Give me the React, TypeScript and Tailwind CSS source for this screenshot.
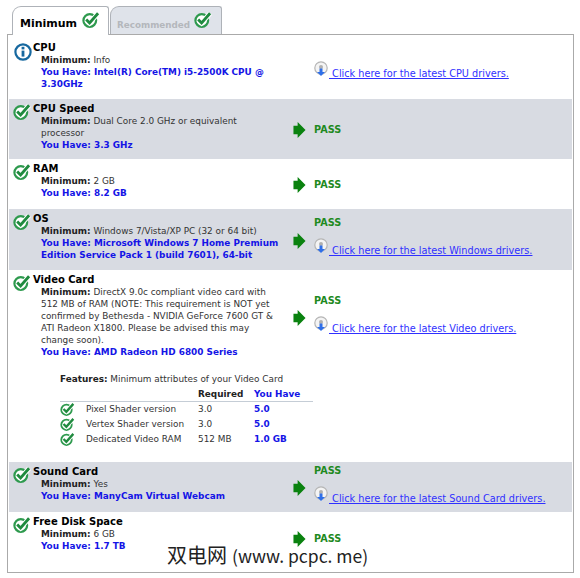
import React from "react";

function Check({ className = "" }: { className?: string }) {
  return (
    <svg viewBox="0 0 19 18" className={className}>
      <circle cx="8.2" cy="10" r="6.7" fill="#fff" stroke="#2e9a4e" strokeWidth="2.4" />
      <path d="M4.4 9 L8 12.6 L17 2.4" fill="none" stroke="#fff" strokeWidth="5.2" />
      <path d="M4.4 9 L8 12.6 L17 2.4" fill="none" stroke="#1f8a3e" strokeWidth="3" />
    </svg>
  );
}

function Info() {
  return (
    <svg viewBox="0 0 18 18" className="w-[18px] h-[18px] shrink-0 mt-[1px] ml-[1px]">
      <circle cx="9" cy="9" r="7.6" fill="#fff" stroke="#16689f" strokeWidth="2.2" />
      <rect x="7.6" y="7.6" width="2.8" height="6" fill="#16689f" />
      <rect x="7.6" y="3.8" width="2.8" height="2.6" fill="#16689f" />
    </svg>
  );
}

function Arrow() {
  return (
    <svg viewBox="0 0 14 18" className="w-[13px] h-[18px] shrink-0">
      <path d="M0.5 4.5 H5 V0.5 L13.5 9 L5 17.5 V13.5 H0.5 Z" fill="#0a820f" />
    </svg>
  );
}

function Pass() {
  return <div className="font-bold text-[#1f8a1f] text-[9.7px] leading-[12px]">PASS</div>;
}

function Driver({ name }: { name: string }) {
  return (
    <div className="flex items-end h-[18px]">
      <svg viewBox="0 0 15 17" className="w-[15px] h-[17px] shrink-0 mb-[2px]">
        <circle cx="7" cy="7" r="6.2" fill="#f4f4f4" stroke="#b5b5b5" strokeWidth="1.2" />
        <circle cx="7" cy="6" r="2" fill="#b0b0b0" />
        <path d="M5.5 7.5 H8.5 V11 H11 L7 15 L3 11 H5.5 Z" fill="#2f6fe8" />
      </svg>
      <a className="text-[#3030ff] underline text-[9.72px] leading-[13px] whitespace-pre">{` Click here for the latest ${name} drivers.`}</a>
    </div>
  );
}

function Row({
  icon,
  title,
  min,
  have,
  shaded,
  h,
  pt = "pt-[3px]",
  rightH = "h-full",
  pass,
  driver,
  children,
}: {
  icon?: React.ReactNode;
  title: string;
  min: React.ReactNode;
  have: React.ReactNode;
  shaded?: boolean;
  h: string;
  pt?: string;
  rightH?: string;
  pass?: boolean;
  driver?: string;
  children?: React.ReactNode;
}) {
  return (
    <div className={`flex ${h} ${shaded ? "bg-[#d8dbe2]" : ""}`}>
      <div className={`w-[284px] shrink-0 flex pl-[4px] pr-[13px] ${pt}`}>
        <div className="w-[20px] shrink-0 pt-[1px]">{icon ?? <Check className="w-[18px] h-[17px]" />}</div>
        <div className="min-w-0 flex-1">
          <div className="font-bold text-black text-[10px] leading-[13px]">{title}</div>
          <div className="pl-[8px] text-[8.9px] leading-[12px] text-[#333]">
            <div>
              <b className="text-[#222]">Minimum:</b> {min}
            </div>
            <div className="font-bold text-[#1414e6]">{have}</div>
          </div>
          {children}
        </div>
      </div>
      <div className={`flex-1 flex items-center pt-[2px] ${rightH}`}>
        <div className="w-[21px] shrink-0 flex">{pass && <Arrow />}</div>
        <div className={`flex flex-col gap-[10px] ${pass ? (driver ? "mb-[7px]" : "") : "mt-[5px]"}`}>
          {pass && <Pass />}
          {driver && <Driver name={driver} />}
        </div>
      </div>
    </div>
  );
}

function Feature({ n, r, y }: { n: string; r: string; y: string }) {
  return (
    <div className="flex items-center h-[15px]">
      <Check className="w-[15px] h-[14px] mr-[11px] shrink-0" />
      <div className="w-[112px] text-[#333]">{n}</div>
      <div className="w-[56px] text-[#333]">{r}</div>
      <div className="font-bold text-[#1414e6]">{y}</div>
    </div>
  );
}

export default function App() {
  return (
    <div className="w-[580px] h-[578px] bg-white relative overflow-hidden" style={{ fontFamily: '"DejaVu Sans", Verdana, sans-serif' }}>
      <div className="flex items-end pl-[12px] gap-[1px] h-[34px]">
        <div className="w-[97px] h-[29px] bg-white border border-b-0 border-[#aeb2b8] rounded-tl-[9px] rounded-tr-[3px] -mb-px relative z-10 flex items-start pl-[7px] pt-[9px]">
          <span className="font-bold text-[11px] leading-[16px] text-black">Minimum</span>
          <Check className="w-[18px] h-[17px] ml-[5px] -mt-[5px]" />
        </div>
        <div className="w-[112px] h-[28px] bg-[#dfe3ea] border border-b-0 border-[#aeb2b8] rounded-tl-[9px] rounded-tr-[3px] flex items-start pl-[6px] pt-[11px]">
          <span className="font-bold text-[8.8px] leading-[14px] text-[#b4b7bc]">Recommended</span>
          <Check className="w-[18px] h-[17px] ml-[4px] -mt-[7px]" />
        </div>
      </div>
      <div className="ml-[7px] w-[567px] h-[539px] border border-[#aaa] px-[1px] pt-[1px] text-[#333]">
        <div className="flex flex-col gap-[1px]">
          <Row
            h="h-[62px]"
            pt="pt-[5px]"
            icon={<Info />}
            title="CPU"
            min="Info"
            have="You Have: Intel(R) Core(TM) i5-2500K CPU @ 3.30GHz"
            driver="CPU"
          />
          <Row
            h="h-[60px]"
            shaded
            title="CPU Speed"
            min="Dual Core 2.0 GHz or equivalent processor"
            have="You Have: 3.3 GHz"
            pass
          />
          <Row h="h-[48px]" pt="pt-[2px]" title="RAM" min="2 GB" have="You Have: 8.2 GB" pass />
          <Row
            h="h-[61px]"
            shaded
            title="OS"
            min="Windows 7/Vista/XP PC (32 or 64 bit)"
            have="You Have: Microsoft Windows 7 Home Premium Edition Service Pack 1 (build 7601), 64-bit"
            pass
            driver="Windows"
          />
          <Row
            h="h-[190px]"
            pt="pt-[2px]"
            rightH="h-[92px]"
            title="Video Card"
            min="DirectX 9.0c compliant video card with 512 MB of RAM (NOTE: This requirement is NOT yet confirmed by Bethesda - NVIDIA GeForce 7600 GT & ATI Radeon X1800. Please be advised this may change soon)."
            have="You Have: AMD Radeon HD 6800 Series"
            pass
            driver="Video"
          >
            <div className="ml-[27px] mt-[15px] w-[253px] text-[8.9px] leading-[12px]">
              <div className="text-[#333]">
                <b className="text-[#222]">Features:</b> Minimum attributes of your Video Card
              </div>
              <div className="flex h-[15px] items-center border-b border-[#c5cdd6] font-bold mt-[2px]">
                <div className="w-[138px]" />
                <div className="w-[56px] text-[#222]">Required</div>
                <div className="text-[#1414e6]">You Have</div>
              </div>
              <div className="-mt-[1px]">
                <Feature n="Pixel Shader version" r="3.0" y="5.0" />
                <Feature n="Vertex Shader version" r="3.0" y="5.0" />
                <Feature n="Dedicated Video RAM" r="512 MB" y="1.0 GB" />
              </div>
            </div>
          </Row>
          <Row
            h="h-[50px]"
            shaded
            title="Sound Card"
            min="Yes"
            have="You Have: ManyCam Virtual Webcam"
            pass
            driver="Sound Card"
          />
          <Row
            h="h-[57px]"
            pt="pt-[2px]"
            rightH="h-[49px]"
            title="Free Disk Space"
            min="6 GB"
            have="You Have: 1.7 TB"
            pass
          />
        </div>
      </div>
      <div
        className="absolute left-[167px] top-[543px] text-[20px] leading-[24px] text-[#222] whitespace-nowrap"
        style={{
          fontFamily: '"Noto Sans CJK SC", "DejaVu Sans", sans-serif',
          textShadow: "1px 0 0 #fff,-1px 0 0 #fff,0 1px 0 #fff,0 -1px 0 #fff,1px 1px 0 #fff,-1px -1px 0 #fff,1px -1px 0 #fff,-1px 1px 0 #fff",
        }}
      >
        双电网<span className="text-[17.5px] ml-[5px]">(www. pcpc. me)</span>
      </div>
    </div>
  );
}
